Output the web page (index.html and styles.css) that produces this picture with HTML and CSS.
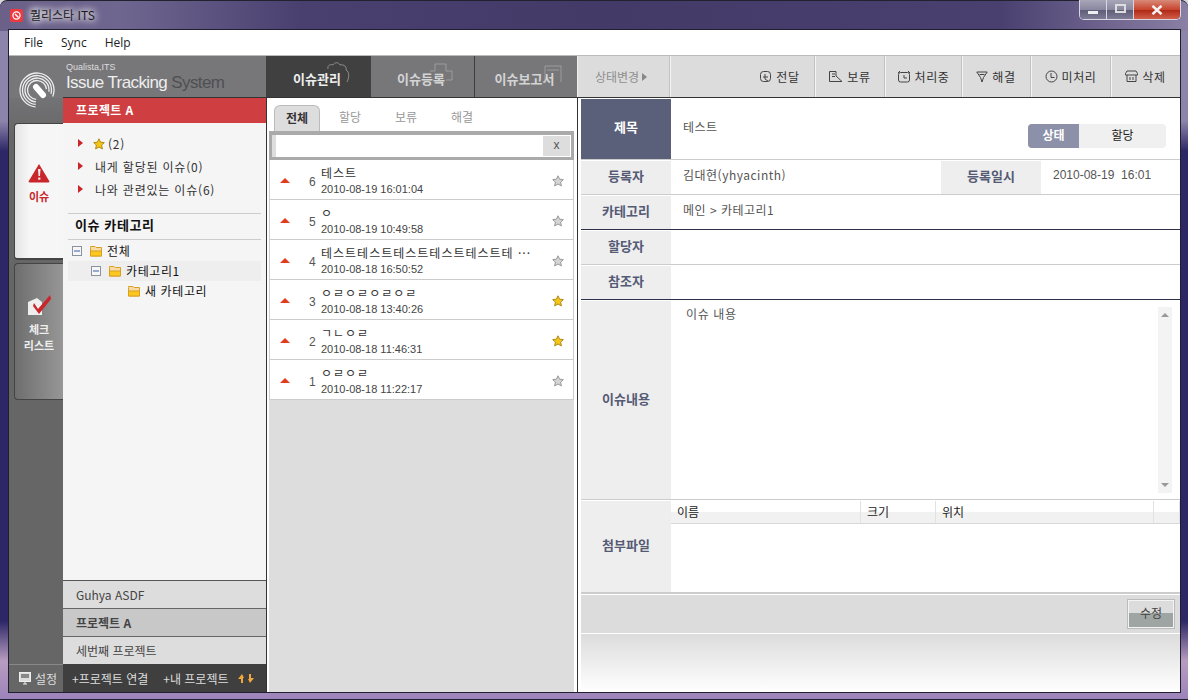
FILE: index.html
```html
<!DOCTYPE html>
<html lang="ko">
<head>
    <meta charset="UTF-8">
    <meta name="viewport" content="width=device-width, initial-scale=1.0">
    <title>퀄리스타 ITS</title>
    <link rel="stylesheet" href="styles.css">
</head>
<body>
    <svg class="defs" width="0" height="0">
        <symbol id="star" viewBox="0 0 12 12">
            <path d="M6 .8 7.6 4.2 11.3 4.6 8.6 7.1 9.4 10.9 6 9 2.6 10.9 3.4 7.1 .7 4.6 4.4 4.2Z" stroke-width="1"/>
        </symbol>
        <symbol id="folder" viewBox="0 0 12 12">
            <path d="M.5 2.5V1.5H5L6 2.5H11.5V11H.5Z" fill="#f8d9a8" stroke="#d8a020"/>
            <path d="M.5 11V6H11.5V11Z" fill="#fcc81e" stroke="#d8a020"/>
        </symbol>
        <symbol id="minus" viewBox="0 0 10 10">
            <rect x=".5" y=".5" width="9" height="9" fill="#f6f6f6" stroke="#8a92a0"/>
            <path d="M2 5H8" stroke="#3a5aa8"/>
        </symbol>
    </svg>

    <div class="window">
        <div class="titlebar">
            <svg class="app-icon" width="13" height="13" viewBox="0 0 13 13">
                <rect width="13" height="13" rx="2" fill="#ee3a3e"/>
                <circle cx="6.5" cy="6.5" r="3.6" fill="none" stroke="#fff" stroke-width="1.2"/>
                <path d="M5 5 8.5 8.5" stroke="#fff" stroke-width="1.4"/>
            </svg>
            <span class="app-title">퀄리스타 ITS</span>
            <div class="winbtns">
                <div class="winbtn"><span class="glyph-min"></span></div>
                <div class="winbtn"><span class="glyph-max"></span></div>
                <div class="winbtn close">
                    <svg width="12" height="10" viewBox="0 0 12 10"><path d="M1.5 .8 10.5 9.2M10.5 .8 1.5 9.2" stroke="#f4f0f0" stroke-width="2.6"/></svg>
                </div>
            </div>
        </div>

        <div class="client">
            <div class="menubar">
                <span>File</span>
                <span>Sync</span>
                <span>Help</span>
            </div>

            <div class="appbar">
                <div class="brand">
                    <svg class="brand-mark" width="36" height="36" viewBox="0 0 36 36" fill="none" stroke="#eee" stroke-width="1.3">
                        <g transform="rotate(95 18 18)">
                            <circle cx="18" cy="18" r="17" pathLength="100" stroke-dasharray="80 20"/>
                            <circle cx="18" cy="18" r="14.5" pathLength="100" stroke-dasharray="78 22"/>
                            <circle cx="18" cy="18" r="12" pathLength="100" stroke-dasharray="76 24"/>
                            <circle cx="18" cy="18" r="9.5" pathLength="100" stroke-dasharray="72 28"/>
                        </g>
                        <path d="M17 15 24 23" stroke="#fff" stroke-width="6" stroke-linecap="round"/>
                    </svg>
                    <div class="brand-text">
                        <div class="brand-small">Qualista,ITS</div>
                        <div class="brand-big">Issue Tracking <em>System</em></div>
                    </div>
                </div>
                <div class="navtabs">
                    <div class="navtab active">
                        <svg class="navtab-art" width="38" height="30" viewBox="0 0 38 30" fill="none" stroke="#aaa">
                            <path d="M7 11C6 7 10 6 12 7 13 4 18 4 19 7 23 6 26 9 25 12 29 14 28 20 26 24"/>
                        </svg>
                        이슈관리
                    </div>
                    <div class="navtab">
                        <svg class="navtab-art" width="38" height="30" viewBox="0 0 38 30" fill="none" stroke="#aaa">
                            <path d="M6 13H11V6H22V13H28V22H22"/>
                        </svg>
                        이슈등록
                    </div>
                    <div class="navtab">
                        <svg class="navtab-art" width="38" height="30" viewBox="0 0 38 30" fill="none" stroke="#aaa">
                            <path d="M18 25V8H34V24M20 12H32"/>
                        </svg>
                        이슈보고서
                    </div>
                </div>
                <div class="toolbar">
                    <div class="status-change">상태변경 <i class="arrow-grey"></i></div>
                    <div class="tool first">
                        <svg width="13" height="13" viewBox="0 0 13 13" fill="none" stroke="#444"><rect x="1.5" y="1.5" width="10" height="10" rx="3"/><path d="M4 7H9M6 4V9L9 11"/></svg>
                        전달
                    </div>
                    <div class="tool">
                        <svg width="15" height="13" viewBox="0 0 15 13" fill="none" stroke="#444"><path d="M1.5 1.5H8V6L14 11.5H1.5ZM4 4H7M4 6.5H7"/></svg>
                        보류
                    </div>
                    <div class="tool wide">
                        <svg width="14" height="13" viewBox="0 0 14 13" fill="none" stroke="#444"><rect x="1.5" y="2.5" width="11" height="9.5" rx="2"/><path d="M7 5V8H10M1 3 3 1M13 3 11 1"/></svg>
                        처리중
                    </div>
                    <div class="tool narrow">
                        <svg width="12" height="12" viewBox="0 0 12 12" fill="none" stroke="#444"><path d="M.8 1H11.2L7.5 6.5 6 11 4.5 6.5ZM3.5 3.5H8.5"/></svg>
                        해결
                    </div>
                    <div class="tool wider">
                        <svg width="13" height="13" viewBox="0 0 13 13" fill="none" stroke="#444"><circle cx="6.5" cy="6.5" r="5.5"/><path d="M6 3V7.5H9.5"/></svg>
                        미처리
                    </div>
                    <div class="tool narrow">
                        <svg width="13" height="13" viewBox="0 0 13 13" fill="none" stroke="#444"><path d="M.5 3.5 2 1H11L12.5 3.5V5H.5ZM2 5V11.5H11V5M5 7V10M8 7V10"/></svg>
                        삭제
                    </div>
                </div>
            </div>

            <div class="main">
                <div class="rail">
                    <div class="rail-tabs">
                        <div class="railtab active">
                            <svg width="22" height="20" viewBox="0 0 22 20">
                                <path d="M11 1 21.5 18.5Q21.5 19.5 20 19.5H2Q.5 19.5 .5 18.5Z" fill="#c9252b"/>
                                <path d="M10 6H12.5L12 13H10.5Z" fill="#eee"/>
                                <rect x="10.2" y="14.5" width="2.2" height="2.2" fill="#eee"/>
                            </svg>
                            <span>이슈</span>
                        </div>
                        <div class="railtab">
                            <svg width="25" height="22" viewBox="0 0 25 22">
                                <path d="M1 8 10 4 15 8V21H1Z" fill="#eee"/>
                                <path d="M7 9 11 15 23 1 24 5 12 20 6 12Z" fill="#c9252b"/>
                            </svg>
                            <span>체크<br>리스트</span>
                        </div>
                    </div>
                    <div class="settings">
                        <svg width="12" height="13" viewBox="0 0 12 13"><rect x=".5" y=".5" width="11" height="9" fill="#ddd" stroke="#eee"/><rect x="2" y="2" width="8" height="4" fill="#888"/><path d="M4 12H8M6 10V12" stroke="#eee"/></svg>
                        설정
                    </div>
                </div>

                <div class="projects">
                    <div class="project-head">프로젝트 A</div>
                    <div class="project-body">
                        <ul class="filters">
                            <li><svg class="star gold"><use href="#star"/></svg>(2)</li>
                            <li>내게 할당된 이슈(0)</li>
                            <li>나와 관련있는 이슈(6)</li>
                        </ul>
                        <div class="cat-title">이슈 카테고리</div>
                        <div class="tree">
                            <div class="tree-row">
                                <svg class="tree-minus"><use href="#minus"/></svg>
                                <svg class="tree-folder"><use href="#folder"/></svg><span>전체</span>
                            </div>
                            <div class="tree-row level1 selected">
                                <svg class="tree-minus"><use href="#minus"/></svg>
                                <svg class="tree-folder"><use href="#folder"/></svg><span>카테고리1</span>
                            </div>
                            <div class="tree-row level2">
                                <svg class="tree-folder"><use href="#folder"/></svg><span>새 카테고리</span>
                            </div>
                        </div>
                    </div>
                    <div class="project-item">Guhya ASDF</div>
                    <div class="project-item current">프로젝트 A</div>
                    <div class="project-item last">세번째 프로젝트</div>
                    <div class="project-foot">
                        <span>+프로젝트 연결</span>
                        <span>+내 프로젝트</span>
                        <svg width="16" height="11" viewBox="0 0 16 11" fill="#f0a83c"><path d="M0 6 4 1 6 5H5V10H3V6ZM16 5 12 10 10 6H11V1H13V5Z"/></svg>
                    </div>
                </div>

                <div class="issues">
                    <div class="issue-tabs">
                        <div class="issue-tab active">전체</div>
                        <div class="issue-tab">할당</div>
                        <div class="issue-tab">보류</div>
                        <div class="issue-tab">해결</div>
                    </div>
                    <div class="search">
                        <div class="search-input"></div>
                        <div class="search-x">x</div>
                    </div>
                    <div class="issue-list">
                        <div class="issue">
                            <i class="up"></i><span class="num">6</span>
                            <div class="issue-info"><div class="issue-name">테스트</div><div class="issue-date">2010-08-19 16:01:04</div></div>
                            <svg class="star grey"><use href="#star"/></svg>
                        </div>
                        <div class="issue">
                            <i class="up"></i><span class="num">5</span>
                            <div class="issue-info"><div class="issue-name">ㅇ</div><div class="issue-date">2010-08-19 10:49:58</div></div>
                            <svg class="star grey"><use href="#star"/></svg>
                        </div>
                        <div class="issue">
                            <i class="up"></i><span class="num">4</span>
                            <div class="issue-info"><div class="issue-name">테스트테스트테스트테스트테스트테 ···</div><div class="issue-date">2010-08-18 16:50:52</div></div>
                            <svg class="star grey"><use href="#star"/></svg>
                        </div>
                        <div class="issue">
                            <i class="up"></i><span class="num">3</span>
                            <div class="issue-info"><div class="issue-name">ㅇㄹㅇㄹㅇㄹㅇㄹ</div><div class="issue-date">2010-08-18 13:40:26</div></div>
                            <svg class="star gold"><use href="#star"/></svg>
                        </div>
                        <div class="issue">
                            <i class="up"></i><span class="num">2</span>
                            <div class="issue-info"><div class="issue-name">ㄱㄴㅇㄹ</div><div class="issue-date">2010-08-18 11:46:31</div></div>
                            <svg class="star gold"><use href="#star"/></svg>
                        </div>
                        <div class="issue">
                            <i class="up"></i><span class="num">1</span>
                            <div class="issue-info"><div class="issue-name">ㅇㄹㅇㄹ</div><div class="issue-date">2010-08-18 11:22:17</div></div>
                            <svg class="star grey"><use href="#star"/></svg>
                        </div>
                    </div>
                </div>

                <div class="detail">
                    <div class="row row-title">
                        <div class="label dark">제목</div>
                        <div class="value title-value">테스트</div>
                        <div class="pill">
                            <span class="pill-on">상태</span>
                            <span class="pill-off">할당</span>
                        </div>
                    </div>
                    <div class="row">
                        <div class="label">등록자</div>
                        <div class="value grow">김대현(yhyacinth)</div>
                        <div class="label label-date">등록일시</div>
                        <div class="value date-value">2010-08-19&nbsp; 16:01</div>
                    </div>
                    <div class="row strong">
                        <div class="label">카테고리</div>
                        <div class="value">메인 &gt; 카테고리1</div>
                    </div>
                    <div class="row">
                        <div class="label">할당자</div>
                    </div>
                    <div class="row strong">
                        <div class="label">참조자</div>
                    </div>
                    <div class="row row-content">
                        <div class="label">이슈내용</div>
                        <div class="content-text">이슈 내용</div>
                        <div class="scrollbar"><i class="sb-up"></i><i class="sb-down"></i></div>
                    </div>
                    <div class="row row-files">
                        <div class="label">첨부파일</div>
                        <div class="files">
                            <div class="files-head">
                                <span class="col-name">이름</span>
                                <span class="col-size">크기</span>
                                <span class="col-path">위치</span>
                                <span class="col-end"></span>
                            </div>
                        </div>
                    </div>
                    <div class="actions">
                        <div class="edit-btn">수정</div>
                    </div>
                    <div class="detail-foot"></div>
                </div>
            </div>
        </div>
    </div>
</body>
</html>
```

FILE: styles.css
```css
* {
    margin: 0;
    padding: 0;
    box-sizing: border-box;
}

html, body {
    width: 1188px;
    height: 700px;
    overflow: hidden;
    background-color: #d8d8dc;
}

body {
    font-family: "Noto Sans CJK KR", "Liberation Sans", sans-serif;
    font-size: 12px;
    color: #333;
}

.defs {
    position: absolute;
}

/* window frame */
.window {
    width: 1188px;
    height: 700px;
    padding: 0 7px 6px 8px;
    display: flex;
    flex-direction: column;
    border-radius: 7px 7px 0 0;
    border: 1px solid #22222e;
    border-width: 1px 0 1px 0;
    background:
        linear-gradient(90deg, #6a6088 0, #6f6690 120px, #4a4070 300px, #443a68 600px, #4a4070 1000px, #8a80a5 1188px) top / 100% 30px no-repeat,
        linear-gradient(#8d84ab 0, #8d84ab 120px, #2d2766 150px, #2d2766 620px, #b89cc0 660px, #9a82ba 700px);
}

.titlebar {
    height: 28px;
    flex: none;
    display: flex;
    align-items: flex-start;
    padding-left: 2px;
}

.app-icon {
    margin-top: 8px;
}

.app-title {
    margin: 6px 0 0 7px;
    font-size: 12px;
    line-height: 16px;
    color: #1c1c1c;
    text-shadow: 0 0 6px #fff, 0 0 8px #fff, 0 0 10px #ddd;
}

.winbtns {
    margin-left: auto;
    display: flex;
    height: 20px;
    margin-top: -1px;
    border: 1px solid #d8d6e0;
    border-top: none;
    border-radius: 0 0 5px 5px;
    overflow: hidden;
}

.winbtn {
    width: 27px;
    display: flex;
    align-items: center;
    justify-content: center;
    background: linear-gradient(#a9a6b9, #8a88a0 50%, #5e5c78 52%, #7d7b95);
    border-right: 1px solid #d8d6e0;
}

.winbtn.close {
    width: 46px;
    border-right: none;
    background: linear-gradient(#d98a78, #c8452e 50%, #b02a18 55%, #d0604a);
}

.glyph-min {
    display: block;
    width: 10px;
    height: 3px;
    margin-top: 6px;
    background-color: #eee;
}

.glyph-max {
    display: block;
    width: 11px;
    height: 9px;
    border: 2px solid #ddd;
    margin-top: -2px;
}

.client {
    flex: 1;
    min-height: 0;
    display: flex;
    flex-direction: column;
    background-color: #fff;
    border: 1px solid #1f1f30;
}

.menubar {
    height: 26px;
    flex: none;
    display: flex;
    align-items: center;
    font-family: "Open Sans", "Liberation Sans", sans-serif;
    font-size: 12px;
    color: #222;
    border-bottom: 1px solid #bbb;
    padding-left: 15px;
    gap: 18px;
}

/* header strip */
.appbar {
    height: 42px;
    flex: none;
    display: flex;
}

.brand {
    width: 257px;
    flex: none;
    position: relative;
    background:
        linear-gradient(#333, #333) right bottom / 203px 1px no-repeat,
        #77777a;
}

.brand-mark {
    position: absolute;
    left: 10px;
    top: 16px;
    z-index: 2;
}

.brand-text {
    position: absolute;
    left: 57px;
    top: 6px;
    color: #eee;
    font-family: "Liberation Sans", sans-serif;
}

.brand-small {
    font-size: 9px;
    line-height: 11px;
    color: #ddd;
}

.brand-big {
    font-size: 17px;
    line-height: 19px;
    letter-spacing: -.6px;
    white-space: nowrap;
}

.brand-big em {
    font-style: normal;
    color: #4f4f52;
}

.navtabs {
    display: flex;
    width: 312px;
    flex: none;
    border-bottom: 1px solid #333;
}

.navtab {
    position: relative;
    flex: none;
    width: 104px;
    display: flex;
    align-items: center;
    justify-content: center;
    padding: 3px 3px 0 0;
    font-size: 13px;
    font-weight: 700;
    color: #d4d4d4;
    background-color: #77777a;
    border-right: 1px solid #3c3c3c;
}

.navtab.active {
    width: 105px;
    background-color: #404040;
    color: #eee;
    border-right: none;
}

.navtab:last-child {
    width: 103px;
    border-right: 1px solid #eee;
}

.navtab-art {
    position: absolute;
    right: 12px;
    top: 2px;
    opacity: .75;
}

.toolbar {
    flex: 1;
    display: flex;
    align-items: center;
    justify-content: flex-end;
    height: 42px;
    background-color: #dcdcdc;
    border-bottom: 1px solid #333;
}

.status-change {
    margin-right: auto;
    width: 92px;
    height: 100%;
    padding-left: 17px;
    display: flex;
    align-items: center;
    gap: 3px;
    color: #8e8e8e;
    box-shadow: 1px 0 0 #f4f4f4, inset -1px 0 0 #c2c2c2;
}

.arrow-grey {
    display: block;
    border-left: 5px solid #888;
    border-top: 4px solid transparent;
    border-bottom: 4px solid transparent;
}

.tool {
    width: 70px;
    height: 100%;
    display: flex;
    align-items: center;
    justify-content: center;
    gap: 4px;
    letter-spacing: .6px;
    color: #333;
    box-shadow: inset 1px 0 0 #f4f4f4;
    border-right: 1px solid #c2c2c2;
}

.tool.first {
    box-shadow: none;
}

.tool.wide {
    width: 77px;
}

.tool.narrow {
    width: 69px;
}

.tool.wider {
    width: 80px;
}

.tool:last-child {
    border-right: none;
}

/* four columns under the header */
.main {
    flex: 1;
    min-height: 0;
    display: flex;
}

.rail {
    width: 54px;
    flex: none;
    display: flex;
    flex-direction: column;
    background: linear-gradient(#737376, #666 40px);
}

.rail-tabs {
    flex: 1;
    padding: 25px 0 0 5px;
    display: flex;
    flex-direction: column;
    gap: 3px;
}

.railtab {
    height: 137px;
    display: flex;
    flex-direction: column;
    align-items: center;
    justify-content: center;
    gap: 5px;
    padding-bottom: 16px;
    border: 1px solid #444;
    border-right: none;
    border-radius: 4px 0 0 4px;
    font-size: 11px;
    font-weight: 700;
    line-height: 16px;
    text-align: center;
    color: #eee;
    background: linear-gradient(90deg, #6e6e6e, #979797);
}

.railtab.active {
    background: linear-gradient(90deg, #e4e4e4, #f6f6f6 30%);
    color: #c9252b;
    border-bottom: 2px solid #444;
}

.settings {
    height: 28px;
    flex: none;
    display: flex;
    align-items: center;
    gap: 4px;
    padding-left: 10px;
    color: #ddd;
    border-top: 1px solid #888;
}

.projects {
    width: 203px;
    flex: none;
    display: flex;
    flex-direction: column;
    background-color: #f5f5f5;
}

.project-head {
    height: 25px;
    flex: none;
    padding-left: 13px;
    line-height: 23px;
    font-weight: 700;
    letter-spacing: .4px;
    color: #fff;
    background-color: #cf3f42;
}

.project-body {
    flex: 1;
    min-height: 0;
    padding-top: 9px;
    background-color: #f5f5f5;
    border-bottom: 1px solid #555;
}

.filters {
    list-style: none;
    height: 81px;
    letter-spacing: .8px;
}

.filters li {
    position: relative;
    height: 23px;
    padding-left: 32px;
    line-height: 22px;
    display: flex;
    align-items: center;
}

.filters li::before {
    content: "";
    position: absolute;
    left: 15px;
    top: 7px;
    border-left: 5px solid #c9252b;
    border-top: 4px solid transparent;
    border-bottom: 4px solid transparent;
}

.filters li:first-child {
    padding-left: 30px;
    gap: 3px;
}

.cat-title {
    margin: 0 5px;
    height: 27px;
    padding-left: 7px;
    line-height: 22px;
    font-size: 13px;
    font-weight: 700;
    letter-spacing: .6px;
    color: #111;
    border-top: 1px solid #ccc;
    border-bottom: 1px solid #ccc;
}

.tree {
    padding-top: 1px;
    margin: 0 5px;
}

.tree-row {
    height: 20px;
    padding-left: 4px;
    display: flex;
    align-items: center;
    letter-spacing: .6px;
    color: #111;
}

.tree-row span {
    margin-top: -2px;
}

.tree-row.level1 {
    padding-left: 23px;
}

.tree-row.level2 {
    padding-left: 60px;
}

.tree-row.selected {
    background-color: #eee;
}

.tree-minus {
    width: 10px;
    height: 10px;
    margin-right: 8px;
}

.tree-folder {
    width: 12px;
    height: 12px;
    margin-right: 5px;
}

.project-item {
    height: 28px;
    flex: none;
    padding-left: 13px;
    line-height: 27px;
    color: #444;
    background-color: #ddd;
    border-bottom: 1px solid #666;
}

.project-item.last {
    height: 27px;
    border-bottom: none;
}

.project-item.current {
    font-weight: 700;
    background-color: #c8c8c8;
}

.project-foot {
    height: 28px;
    flex: none;
    display: flex;
    align-items: center;
    padding-left: 9px;
    gap: 15px;
    color: #ddd;
    background-color: #3f3f3f;
}

.project-foot span:nth-child(2) {
    margin-right: -6px;
}

.issues {
    width: 312px;
    flex: none;
    padding: 0 3px 0 2px;
    display: flex;
    flex-direction: column;
    border-left: 1px solid #333;
    border-right: 1px solid #333;
    background-color: #fff;
}

.issue-tabs {
    height: 33px;
    flex: none;
    padding: 7px 0 0 5px;
    display: flex;
}

.issue-tab {
    width: 56px;
    text-align: center;
    line-height: 24px;
    color: #999;
}

.issue-tab:nth-child(2) {
    margin-left: 2px;
}

.issue-tab.active {
    width: 46px;
    margin-right: 0;
    font-weight: 700;
    color: #333;
    background-color: #ddd;
    border: 1px solid #bbb;
    border-bottom: none;
    border-radius: 6px 6px 0 0;
}

.search {
    height: 29px;
    flex: none;
    display: flex;
    background-color: #fff;
    border: 4px solid #aaa;
    border-width: 4px 3px 3px 3px;
    box-shadow: inset 4px 0 0 #ddd;
    padding: 0 1px 1px 5px;
}

.search-input {
    flex: 1;
}

.search-x {
    width: 27px;
    height: 20px;
    margin-top: 1px;
    text-align: center;
    line-height: 18px;
    color: #555;
    font-family: "Liberation Sans", sans-serif;
    background-color: #ddd;
}

.issue-list {
    flex: 1;
    min-height: 0;
    background-color: #ddd;
}

.issue {
    height: 40px;
    display: flex;
    align-items: center;
    padding-right: 9px;
    background-color: #fff;
    border: 1px solid #ccc;
    border-top: none;
}

.up {
    display: block;
    margin: 2px 0 0 10px;
    border-bottom: 5px solid #e23c1e;
    border-left: 5px solid transparent;
    border-right: 5px solid transparent;
}

.num {
    margin: 5px 0 0 19px;
    width: 12px;
    font-size: 12px;
    font-family: "Liberation Sans", sans-serif;
    color: #555;
}

.issue-info {
    flex: 1;
    min-width: 0;
    padding-top: 2px;
}

.issue-name {
    height: 18px;
    font-size: 12px;
    line-height: 18px;
    letter-spacing: 1px;
    white-space: nowrap;
    color: #333;
}

.issue-date {
    font-family: "Liberation Sans", sans-serif;
    font-size: 11px;
    line-height: 15px;
    color: #444;
}

.star {
    width: 12px;
    height: 12px;
    flex: none;
}

.issue .star {
    margin-top: 2px;
}

.star.gold {
    fill: #f5c516;
    stroke: #b08a14;
}

.star.grey {
    fill: #d4d4d4;
    stroke: #999;
}

/* issue detail */
.detail {
    flex: 1;
    min-width: 0;
    padding-left: 3px;
    display: flex;
    flex-direction: column;
}

.row {
    height: 35px;
    flex: none;
    padding-top: 1px;
    display: flex;
    border-bottom: 1px solid #ccc;
}

.row.strong {
    border-bottom-color: #2c3048;
}

.row-title {
    height: 62px;
}

.row-content {
    height: 200px;
    position: relative;
    border-bottom-color: #ccc;
}

.row-files {
    height: 94px;
    border-bottom-width: 2px;
}

.label {
    width: 90px;
    flex: none;
    display: flex;
    align-items: center;
    justify-content: center;
    padding-bottom: 4px;
    font-size: 13px;
    font-weight: 700;
    color: #555a75;
    background-color: #eee;
}

.label.dark {
    padding-bottom: 6px;
    color: #fff;
    background-color: #5a6079;
}

.label-date {
    width: 100px;
}

.value {
    padding: 0 12px;
    line-height: 28px;
    letter-spacing: .5px;
    color: #555;
}

.value.grow {
    flex: 1;
    width: 269px;
}

.title-value {
    flex: 1;
    line-height: 56px;
}

.date-value {
    width: 139px;
    font-family: "Liberation Sans", sans-serif;
    font-size: 12px;
    letter-spacing: 0;
    padding-right: 0;
}

.pill {
    display: flex;
    height: 24px;
    margin: 25px 14px 0 0;
    line-height: 21px;
    text-align: center;
    border-radius: 4px;
    overflow: hidden;
    background-color: #f0f0f0;
}

.pill-on {
    width: 51px;
    font-weight: 700;
    color: #fff;
    background-color: #8c90a8;
}

.pill-off {
    width: 87px;
    color: #222;
}

.content-text {
    padding: 4px 15px;
    letter-spacing: .6px;
    color: #555;
}

.scrollbar {
    position: absolute;
    right: 8px;
    top: 7px;
    width: 14px;
    height: 186px;
    background-color: #f3f3f3;
}

.sb-up, .sb-down {
    position: absolute;
    left: 3px;
    border-left: 4px solid transparent;
    border-right: 4px solid transparent;
}

.sb-up {
    top: 6px;
    border-bottom: 4px solid #999;
}

.sb-down {
    bottom: 6px;
    border-top: 4px solid #999;
}

.files {
    flex: 1;
    min-width: 0;
}

.files-head {
    height: 23px;
    display: flex;
    line-height: 22px;
    color: #222;
    background: linear-gradient(#fff 50%, #f1f1f1 50%);
    border-bottom: 1px solid #d8d8d8;
}

.files-head span {
    padding-left: 6px;
    border-right: 1px solid #e2e2e2;
}

.col-name {
    width: 190px;
}

.col-size {
    width: 75px;
}

.col-path {
    width: 218px;
}

.col-end {
    flex: 1;
    border-right: none;
}

.actions {
    height: 39px;
    flex: none;
    margin-top: 1px;
    padding: 4px 5px 0 0;
    display: flex;
    justify-content: flex-end;
    background-color: #dcdcdc;
    border-bottom: 1px solid #fff;
}

.edit-btn {
    width: 48px;
    height: 30px;
    text-align: center;
    line-height: 25px;
    color: #444;
    border: 1px solid #bbb;
    outline: 1px solid #f4f4f4;
    outline-offset: -2px;
    background: linear-gradient(#dcdcdc 45%, #9ea5a3 45%);
}

.detail-foot {
    flex: 1;
    background: linear-gradient(#dcdcdc, #fff);
}
```
